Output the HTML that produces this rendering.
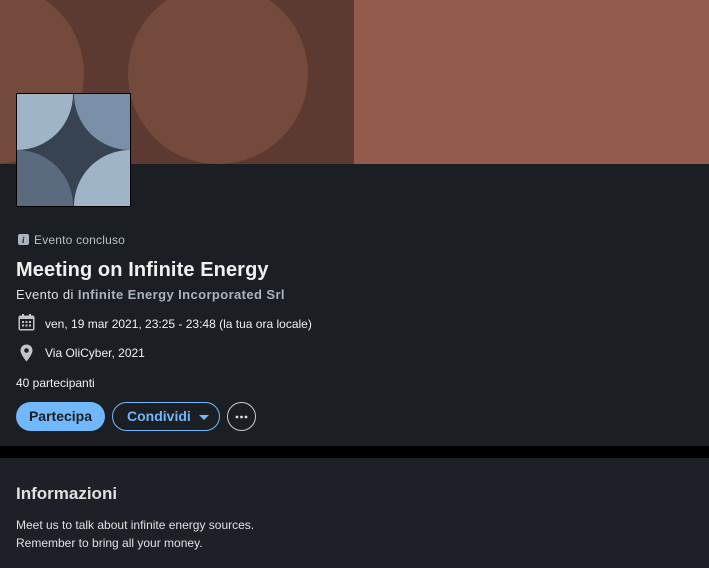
<!DOCTYPE html>
<html><head><meta charset="utf-8"><style>
*{margin:0;padding:0;box-sizing:border-box}
body{width:709px;height:568px;background:#1d2026;font-family:"Liberation Sans",sans-serif;color:#e8e8e8;position:relative;overflow:hidden}
.a{position:absolute;white-space:nowrap}
</style></head><body>
<svg class="a" style="left:0;top:0" width="709" height="164">
<rect width="354" height="164" fill="#5d3a31"/>
<rect x="354" width="355" height="164" fill="#935b4b"/>
<clipPath id="c"><rect width="354" height="164"/></clipPath>
<g clip-path="url(#c)" fill="#744a3d"><circle cx="-6" cy="74" r="90"/><circle cx="218" cy="74" r="90"/></g>
</svg>
<div style="position:absolute;left:0;top:164px;width:709px;height:282px;background:#1b1f23"></div>
<div style="position:absolute;left:0;top:446px;width:709px;height:12px;background:#000"></div>
<div style="position:absolute;left:0;top:458px;width:709px;height:110px;background:#1d2026"></div>
<svg class="a" style="left:16px;top:93px" width="115" height="114">
<rect width="115" height="114" fill="#000"/>
<clipPath id="l"><rect x="1" y="1" width="113" height="112"/></clipPath>
<g clip-path="url(#l)"><rect width="115" height="114" fill="#374350"/>
<circle cx="1" cy="1" r="56" fill="#a0b4c8"/><circle cx="114" cy="1" r="56" fill="#7a90a8"/>
<circle cx="1" cy="113" r="56" fill="#5a6b80"/><circle cx="114" cy="113" r="56" fill="#a0b4c8"/></g>
</svg>
<svg class="a" style="left:18px;top:234px" width="11" height="11"><rect width="11" height="11" rx="2" fill="#a9b4bf"/><text x="4" y="9" font-size="9" font-weight="bold" font-style="italic" fill="#1b1f23" font-family="Liberation Serif">i</text></svg>
<div class="a" style="left:34px;top:233px;font-size:12px;color:#b8c2cc;letter-spacing:0.2px">Evento concluso</div>
<div class="a" style="left:16px;top:259px;font-size:20px;color:#f0f0f0;font-weight:bold;letter-spacing:0.1px">Meeting on Infinite Energy</div>
<div class="a" style="left:16px;top:287px;font-size:13px;color:#e0e0e0;letter-spacing:0.4px">Evento di <span style="color:#a9b4bf;font-weight:bold">Infinite Energy Incorporated Srl</span></div>
<svg class="a" style="left:18px;top:314px" width="17" height="17"><rect x="0.5" y="1.5" width="16" height="15" rx="2" fill="#c0c4c8"/><rect x="2" y="5" width="13" height="10" fill="#1b1f23"/><g fill="#c0c4c8"><rect x="4" y="7" width="2" height="2"/><rect x="7.5" y="7" width="2" height="2"/><rect x="11" y="7" width="2" height="2"/><rect x="4" y="10.5" width="2" height="2"/><rect x="7.5" y="10.5" width="2" height="2"/><rect x="11" y="10.5" width="2" height="2"/></g><rect x="4" y="0" width="2" height="3" fill="#c0c4c8"/><rect x="11" y="0" width="2" height="3" fill="#c0c4c8"/></svg>
<div class="a" style="left:45px;top:317px;font-size:12px;color:#f0f0f0">ven, 19 mar 2021, 23:25 - 23:48 (la tua ora locale)</div>
<svg class="a" style="left:20px;top:344px" width="13" height="18"><path d="M6.5 0.5C3 0.5 0.5 3 0.5 6.5 0.5 10.5 6.5 17.5 6.5 17.5S12.5 10.5 12.5 6.5C12.5 3 10 0.5 6.5 0.5Z" fill="#c0c4c8"/><circle cx="6.5" cy="6.5" r="2.3" fill="#1b1f23"/></svg>
<div class="a" style="left:45px;top:346px;font-size:12px;color:#f0f0f0">Via OliCyber, 2021</div>
<div class="a" style="left:16px;top:376px;font-size:12px;color:#f0f0f0">40 partecipanti</div>
<div class="a" style="left:16px;top:402px;width:89px;height:29px;border-radius:15px;background:#71b7fb;color:#1b1f23;font-weight:bold;font-size:14px;text-align:center;line-height:29px">Partecipa</div>
<div class="a" style="left:112px;top:402px;width:108px;height:29px;border-radius:15px;border:1px solid #71b7fb;color:#71b7fb;font-weight:bold;font-size:14px;line-height:27px;padding-left:14px">Condividi <span style="display:inline-block;width:0;height:0;border-left:5px solid transparent;border-right:5px solid transparent;border-top:5px solid #71b7fb;vertical-align:middle;margin-left:4px"></span></div>
<svg class="a" style="left:227px;top:402px" width="29" height="29"><circle cx="14.5" cy="14.5" r="14" fill="none" stroke="#c8ccd0"/><g fill="#e0e0e0"><circle cx="10" cy="15" r="1.4"/><circle cx="14.5" cy="15" r="1.4"/><circle cx="19" cy="15" r="1.4"/></g></svg>
<div class="a" style="left:16px;top:484px;font-size:17px;font-weight:bold;color:#e0e0e0">Informazioni</div>
<div class="a" style="left:16px;top:516px;font-size:12px;color:#e0e0e0;line-height:18px">Meet us to talk about infinite energy sources.<br>Remember to bring all your money.</div>
</body></html>
